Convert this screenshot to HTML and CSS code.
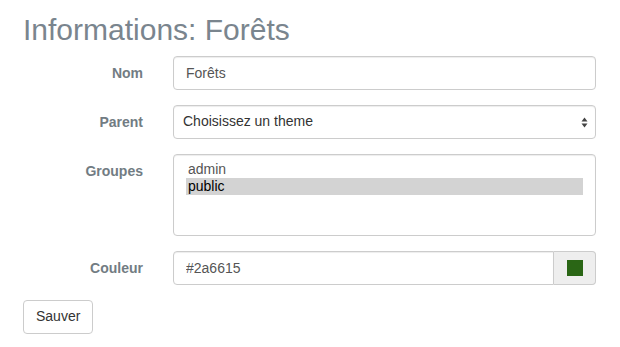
FILE: index.html
```html
<!DOCTYPE html>
<html lang="fr">
<head>
<meta charset="utf-8">
<title>Informations: Forêts</title>
<link rel="stylesheet" href="styles.css">
</head>
<body>
<div class="page">
  <h2 class="title">Informations: Forêts</h2>
  <form class="form">
    <div class="row">
      <label class="label" for="nom">Nom</label>
      <div class="field"><input class="control" id="nom" type="text" value="Forêts"></div>
    </div>
    <div class="row">
      <label class="label" for="parent">Parent</label>
      <div class="field select-wrap">
        <select class="control select" id="parent"><option>Choisissez un theme</option></select>
        <svg class="arrows" width="7" height="11" viewBox="0 0 7 11"><path d="M3.5 0.5 L6.5 4.5 L0.5 4.5 Z M3.5 10.5 L6.5 6.5 L0.5 6.5 Z" fill="#444"/></svg>
      </div>
    </div>
    <div class="row">
      <label class="label" for="groupes">Groupes</label>
      <div class="field">
        <div class="listbox" id="groupes" role="listbox" aria-multiselectable="true">
          <div class="opt" role="option">admin</div>
          <div class="opt selected" role="option" aria-selected="true">public</div>
        </div>
      </div>
    </div>
    <div class="row">
      <label class="label" for="couleur">Couleur</label>
      <div class="field group">
        <input class="control group-input" id="couleur" type="text" value="#2a6615">
        <span class="addon"><i class="swatch"></i></span>
      </div>
    </div>
    <div class="actions">
      <button class="btn" type="button">Sauver</button>
    </div>
  </form>
</div>
</body>
</html>
```
FILE: styles.css
```css
* { box-sizing: border-box; }
html, body { margin: 0; padding: 0; background: #fff; }
body {
  font-family: "Liberation Sans", Arial, Helvetica, sans-serif;
  font-size: 14px;
  line-height: 1.42857;
  color: #333;
}
.page { padding: 13px 24px 0 23px; }
.title {
  margin: 0 0 10px;
  font-size: 30px;
  font-weight: 400;
  line-height: 33px;
  color: #7a858e;
}
.form { display: flex; flex-direction: column; gap: 15px; }
.row { display: flex; gap: 30px; align-items: flex-start; }
.label {
  width: 120px;
  flex: none;
  text-align: right;
  font-weight: 700;
  color: #727c83;
  padding-top: 8px;
}
.field { flex: 1; min-width: 0; }
.control {
  display: block;
  width: 100%;
  height: 34px;
  padding: 6px 12px;
  font: inherit;
  font-size: 14px;
  color: #555;
  background: #fff;
  border: 1px solid #ccc;
  border-radius: 4px;
  box-shadow: inset 0 1px 1px rgba(0,0,0,.075);
  outline: none;
}
.select-wrap { position: relative; }
.select {
  appearance: none;
  -webkit-appearance: none;
  padding-left: 9px;
  color: #333;
}
.arrows { position: absolute; right: 8px; top: 12px; pointer-events: none; }
.listbox {
  height: 82px;
  padding: 6px 12px;
  border: 1px solid #ccc;
  border-radius: 4px;
  box-shadow: inset 0 1px 1px rgba(0,0,0,.075);
  font-size: 14px;
}
.opt { padding: 0 2px 1px; line-height: 16px; color: #555; }
.opt.selected { background: #d3d3d3; color: #000; }
.group { display: flex; }
.group-input { flex: 1; border-radius: 4px 0 0 4px; }
.addon {
  flex: none;
  width: 42px;
  height: 34px;
  display: flex;
  align-items: center;
  justify-content: center;
  background: #eee;
  border: 1px solid #ccc;
  border-left: none;
  border-radius: 0 4px 4px 0;
}
.swatch { display: block; width: 16px; height: 16px; background: #2a6615; }
.actions { display: flex; }
.btn {
  height: 34px;
  padding: 6px 12px;
  font: inherit;
  font-size: 14px;
  color: #333;
  background: #fff;
  border: 1px solid #ccc;
  border-radius: 4px;
  width: 70px;
}
```
